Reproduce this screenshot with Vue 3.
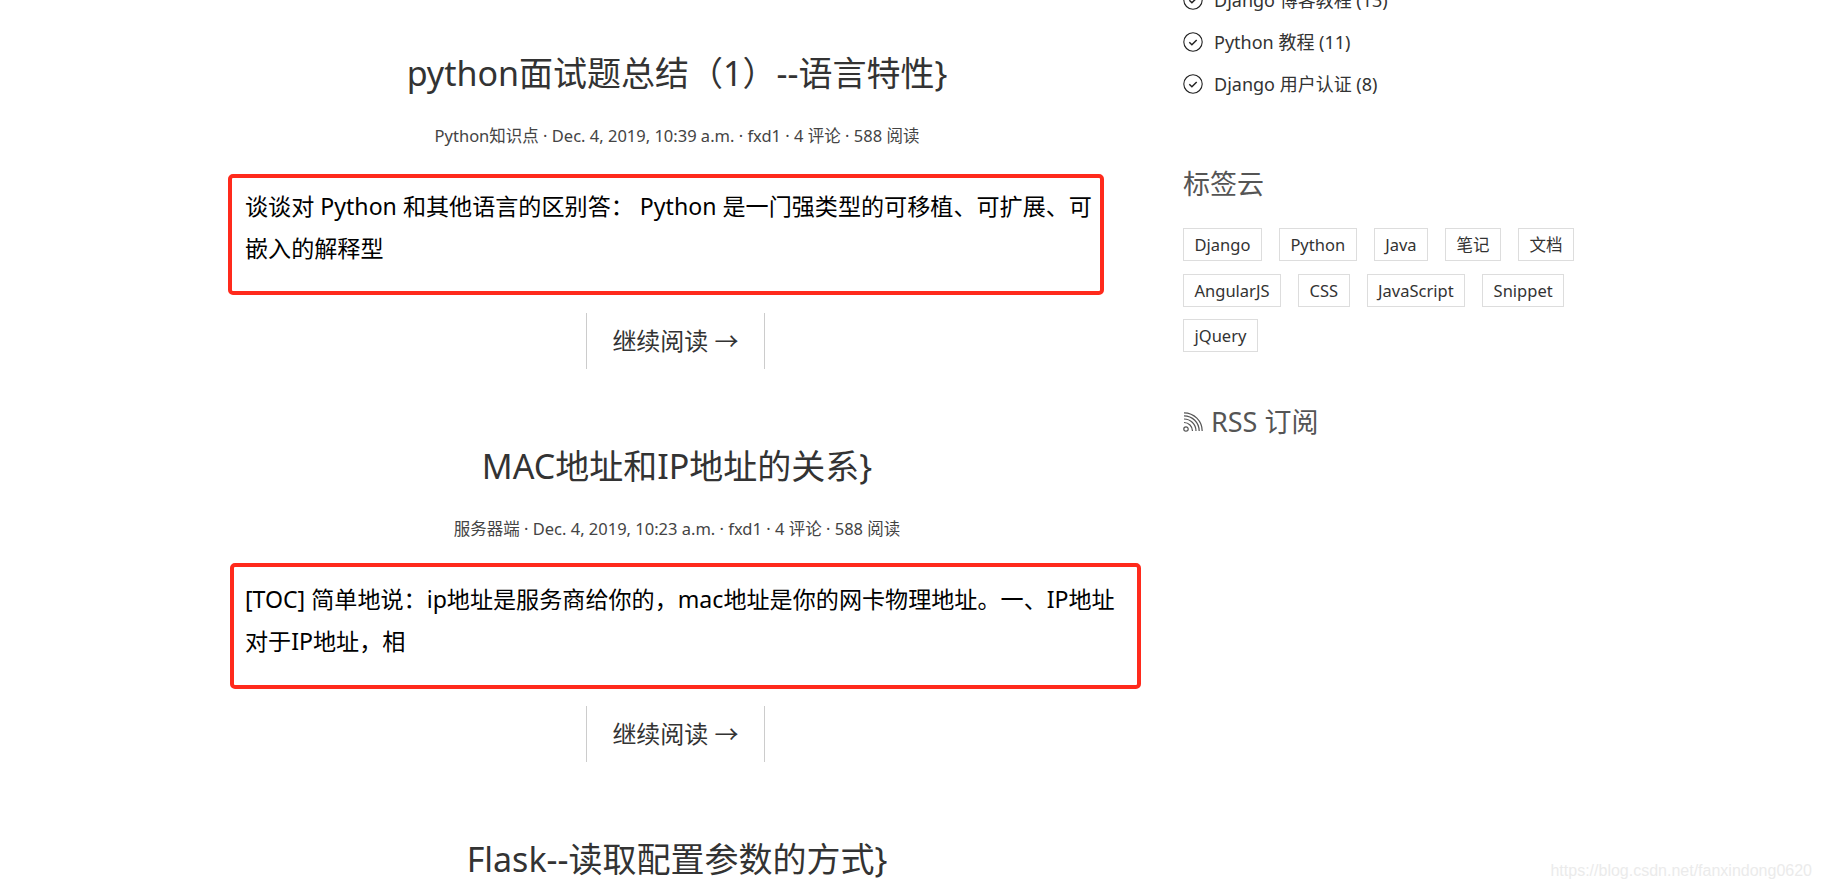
<script setup>
const posts = [
  {
    title: 'python面试题总结（1）--语言特性}',
    meta: 'Python知识点 · Dec. 4, 2019, 10:39 a.m. · fxd1 · 4 评论 · 588 阅读',
    text: '谈谈对 Python 和其他语言的区别答： Python 是一门强类型的可移植、可扩展、可\n嵌入的解释型',
    mark: 'mark-a'
  },
  {
    title: 'MAC地址和IP地址的关系}',
    meta: '服务器端 · Dec. 4, 2019, 10:23 a.m. · fxd1 · 4 评论 · 588 阅读',
    text: '[TOC] 简单地说：ip地址是服务商给你的，mac地址是你的网卡物理地址。一、IP地址\n对于IP地址，相',
    mark: 'mark-b'
  }
]

const cats = ['Django 博客教程 (13)', 'Python 教程 (11)', 'Django 用户认证 (8)']
const tags = ['Django', 'Python', 'Java', '笔记', '文档', 'AngularJS', 'CSS', 'JavaScript', 'Snippet', 'jQuery']
</script>

<template>
  <div class="page">
    <main class="posts">
      <article v-for="post in posts" :key="post.title" class="post">
        <h2 class="title">{{ post.title }}</h2>
        <p class="meta">{{ post.meta }}</p>
        <p class="text">{{ post.text }}</p>
        <a class="more">继续阅读 →</a>
        <div class="mark" :class="post.mark"></div>
      </article>
      <article class="post">
        <h2 class="title">Flask--读取配置参数的方式}</h2>
      </article>
    </main>

    <aside class="side">
      <ul class="cats">
        <li v-for="cat in cats" :key="cat">
          <svg class="check" viewBox="0 0 20 20" width="20" height="20">
            <circle cx="10" cy="10" r="9.200" fill="none" stroke="#222" stroke-width="1.1" />
            <path d="M6.300 10.300l2.600 2.500 4.800-4.800" fill="none" stroke="#222" stroke-width="1.500" />
          </svg>
          {{ cat }}
        </li>
      </ul>

      <h3 class="side-title tags-title">标签云</h3>
      <div class="tags">
        <a v-for="tag in tags" :key="tag" class="tag">{{ tag }}</a>
      </div>

      <h3 class="side-title rss">
        <svg viewBox="0 0 20 20" width="20" height="20">
          <circle cx="3" cy="17" r="2.200" fill="none" stroke="#555" stroke-width="1.200" />
          <g fill="none" stroke="#555" stroke-width="1.200">
            <path d="M1 10.500a8.500 8.500 0 0 1 8.500 8.500" />
            <path d="M1 7a12 12 0 0 1 12 12" />
            <path d="M1 3.800a15.200 15.200 0 0 1 15.200 15.200" />
            <path d="M1 .8a18.200 18.200 0 0 1 18.200 18.200" />
          </g>
        </svg>
        RSS 订阅
      </h3>
    </aside>

    <span class="watermark">https://blog.csdn.net/fanxindong0620</span>
  </div>
</template>

<style scoped>
.page {
  position: relative;
  display: flex;
  height: 888px;
  overflow: hidden;
  background: #fff;
  padding-left: 245px;
  box-sizing: border-box;
  font-family: "Noto Sans", "Noto Sans CJK SC", sans-serif;
  color: #333;
}

.posts {
  width: 864px;
  padding-top: 51px;
  flex-shrink: 0;
}

.post {
  position: relative;
  height: 393px;
  text-align: center;
}

.title {
  margin: 0;
  font-size: 34px;
  font-weight: 400;
  line-height: 44px;
}

.meta {
  margin: 29px 0 0;
  font-size: 16.500px;
  line-height: 24px;
  color: #444;
}

.text {
  margin: 37px -10px 44px 0;
  height: 84px;
  font-size: 23.100px;
  line-height: 42px;
  text-align: left;
  white-space: pre-line;
  color: #000;
}

.more {
  display: inline-block;
  margin-right: 3px;
  padding: 0 25px;
  font-size: 24px;
  line-height: 56px;
  border-left: 1px solid #ccc;
  border-right: 1px solid #ccc;
}

.mark {
  position: absolute;
  border: 4px solid #ff2a1c;
  border-radius: 5px;
  box-sizing: border-box;
}

.mark-a {
  left: -17px;
  top: 123px;
  width: 876px;
  height: 121px;
}

.mark-b {
  left: -15px;
  top: 119px;
  width: 911px;
  height: 126px;
}

.side {
  margin: -21px 0 0 74px;
  width: 400px;
}

.cats {
  margin: 0;
  padding: 0;
  list-style: none;
  font-size: 18px;
  line-height: 42px;
}

.cats li {
  display: flex;
  align-items: center;
}

.check {
  margin-right: 11px;
}

.side-title {
  margin: 0;
  font-size: 27px;
  font-weight: 400;
  line-height: 36px;
  color: #555;
}

.tags-title {
  margin-top: 61px;
}

.tags {
  display: flex;
  flex-wrap: wrap;
  gap: 12.500px 17px;
  margin-top: 26px;
}

.tag {
  padding: 0 10.500px;
  font-size: 16.500px;
  line-height: 31px;
  border: 1px solid #ddd;
}

.rss {
  display: flex;
  align-items: center;
  gap: 8px;
  margin-top: 52px;
}

.watermark {
  position: absolute;
  right: 10px;
  bottom: 8px;
  font-family: "Liberation Sans", Arial, sans-serif;
  font-size: 16px;
  color: #ebebeb;
}
</style>
